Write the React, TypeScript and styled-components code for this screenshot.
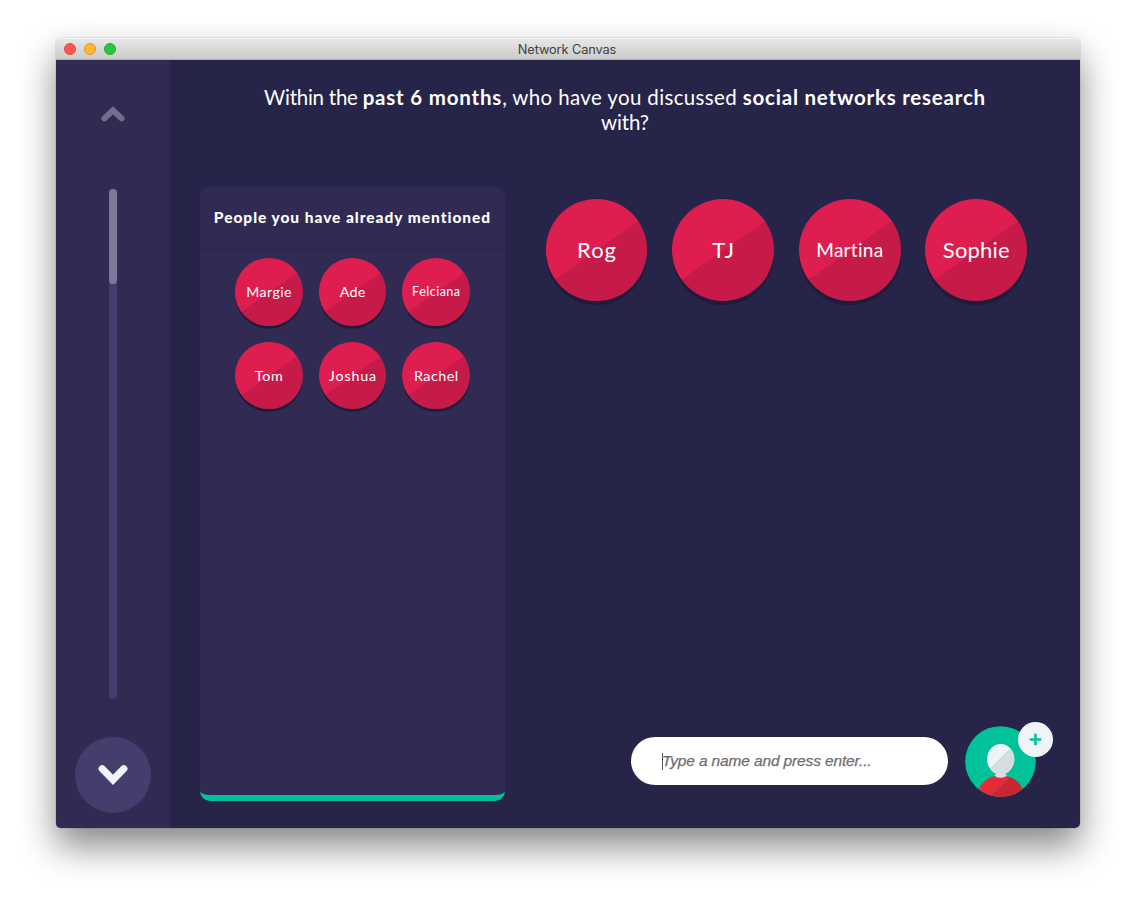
import React from "react";
import styled, { createGlobalStyle } from "styled-components";

const colors = {
  background: "#272449",
  panel: "#312b54",
  control: "#433e6d",
  node: "#df1e50",
  nodeShade: "#c61a49",
  nodeShadow: "#1f1c3b",
  teal: "#00c299",
  light: "#f0f4f6",
};

const GlobalStyle = createGlobalStyle`
  * { box-sizing: border-box; }
  html, body { margin: 0; background: #fff; }
  body {
    font-family: Lato, "Open Sans", sans-serif;
    font-variant-ligatures: none;
    color: #fff;
    overflow: hidden;
  }
`;

const Desktop = styled.div`
  width: 1136px;
  height: 902px;
  padding: 38px 56px;
`;

const Window = styled.div`
  width: 1024px;
  height: 790px;
  display: flex;
  flex-direction: column;
  border-radius: 5px;
  box-shadow: 0 0 1px rgba(0, 0, 0, 0.6), 0 18px 36px rgba(0, 0, 0, 0.48);
`;

const TitleBar = styled.header`
  height: 22px;
  flex: none;
  display: grid;
  grid-template-columns: 1fr auto 1fr;
  align-items: center;
  padding: 0 8px;
  border-radius: 5px 5px 0 0;
  border-bottom: 1px solid #b0b0b0;
  background: linear-gradient(#e8e8e8, #cbcbcb);
  box-shadow: inset 0 1px #f4f4f4;
`;

const Lights = styled.div`
  display: flex;
  gap: 8px;
`;

const Light = styled.span<{ $fill: string; $edge: string }>`
  width: 12px;
  height: 12px;
  border-radius: 50%;
  background: ${(p) => p.$fill};
  border: 1px solid ${(p) => p.$edge};
`;

const Title = styled.span`
  font: 400 12.8px/20px Inter, sans-serif;
  letter-spacing: -0.12px;
  padding: 2px 2px 0 0;
  color: #404040;
`;

const Body = styled.div`
  flex: 1;
  display: flex;
  min-height: 0;
  overflow: hidden;
  border-radius: 0 0 5px 5px;
  background: ${colors.background};
`;

const Sidebar = styled.nav`
  width: 114px;
  display: flex;
  flex-direction: column;
  align-items: center;
  padding: 16px 0 15px;
  background: ${colors.panel};
`;

const NavButton = styled.button<{ $filled?: boolean }>`
  width: 76px;
  height: 76px;
  flex: none;
  padding: 0;
  border: 0;
  border-radius: 50%;
  background: ${(p) => (p.$filled ? colors.control : "transparent")};
  svg { display: block; }
`;

const Track = styled.div`
  width: 8px;
  height: 510px;
  margin: 37px 0 38px;
  border-radius: 4px;
  background: ${colors.control};
`;

const Progress = styled.div`
  height: 95px;
  border-radius: 4px;
  background: #7d799a;
`;

const Stage = styled.main`
  flex: 1;
  display: flex;
  flex-direction: column;
  padding: 25px 27px 27px 30px;
`;

const Prompt = styled.h1`
  height: 102px;
  margin: 0;
  padding-right: 3px;
  text-align: center;
  font-size: 20.5px;
  font-weight: 400;
  line-height: 25px;
  white-space: nowrap;
`;

const Span = styled.span<{ $spacing: number; $bold?: boolean }>`
  letter-spacing: ${(p) => p.$spacing}px;
  font-weight: ${(p) => (p.$bold ? 700 : 400)};
`;

const Columns = styled.div`
  flex: 1;
  display: flex;
`;

const Panel = styled.section`
  width: 305px;
  height: 614px;
  border-radius: 10px;
  border-bottom: 6px solid ${colors.teal};
  background: ${colors.panel};
`;

const PanelTitle = styled.h2`
  height: 63px;
  margin: 0;
  border-bottom: 1px solid ${colors.background};
  text-align: center;
  font-size: 15.5px;
  font-weight: 900;
  line-height: 61px;
  letter-spacing: 0.95px;
  white-space: nowrap;
`;

const PanelNodes = styled.div`
  display: grid;
  grid-template-columns: repeat(3, 67.5px);
  justify-content: center;
  gap: 16.1px;
  padding-top: 8.4px;
`;

const Main = styled.section`
  flex: 1;
  display: flex;
  flex-direction: column;
  justify-content: space-between;
`;

const MainNodes = styled.div`
  display: flex;
  gap: 24.7px;
  padding: 12.4px 0 0 40.6px;
`;

const Node = styled.div<{ $size: number; $font: number; $spacing: number }>`
  width: ${(p) => p.$size}px;
  height: ${(p) => p.$size}px;
  display: flex;
  align-items: center;
  justify-content: center;
  border-radius: 50%;
  padding: 0 0 1.4px ${(p) => p.$spacing}px;
  font-size: ${(p) => p.$font}px;
  letter-spacing: ${(p) => p.$spacing}px;
  background: linear-gradient(145deg, ${colors.node} 50%, ${colors.nodeShade} 50.5%);
  box-shadow: 0 ${(p) => p.$size * 0.04}px 0 ${colors.nodeShadow};
`;

const AddRow = styled.div`
  display: flex;
  align-items: flex-end;
  justify-content: flex-end;
  padding: 0 17px 4px 0;
`;

const NameField = styled.div`
  width: 317px;
  height: 48px;
  display: flex;
  align-items: center;
  margin: 0 17px 12px 0;
  padding-left: 31px;
  border-radius: 24px;
  background: #fff;
  color: #6e6e6e;
  font: italic 400 15.5px/48px "Liberation Sans", Arial, sans-serif;
  letter-spacing: -0.14px;
  -webkit-text-stroke: 0.25px #6e6e6e;
`;

const Caret = styled.span`
  width: 1px;
  height: 17px;
  margin-right: -1px;
  background: #555;
`;

const AddPerson = styled.button`
  position: relative;
  width: 71px;
  height: 71px;
  padding: 0;
  border: 0;
  background: none;
`;

const Badge = styled.span`
  position: absolute;
  top: -4.5px;
  right: -17px;
  width: 35px;
  height: 35px;
  border-radius: 50%;
  background: ${colors.light};
  svg { display: block; }
`;

const mentioned = [
  { name: "Margie", font: 14, spacing: 0.5 },
  { name: "Ade", font: 14.3, spacing: 0.3 },
  { name: "Felciana", font: 12.5, spacing: 0.5 },
  { name: "Tom", font: 14.3, spacing: 0.5 },
  { name: "Joshua", font: 14.3, spacing: 0.85 },
  { name: "Rachel", font: 14.3, spacing: 0.5 },
];

const discussed = [
  { name: "Rog", font: 22, spacing: 1 },
  { name: "TJ", font: 22, spacing: 1 },
  { name: "Martina", font: 19, spacing: 0.3 },
  { name: "Sophie", font: 22, spacing: 0.2 },
];

const Avatar = () => (
  <svg width="71" height="71" viewBox="134 78 213 213" style={{ display: "block" }}>
    <defs>
      <clipPath id="disc"><circle cx="240.5" cy="184.5" r="106" /></clipPath>
      <clipPath id="head"><ellipse cx="241" cy="177.5" rx="41" ry="45.5" /></clipPath>
      <clipPath id="torso"><ellipse cx="241" cy="292" rx="71" ry="66" /></clipPath>
    </defs>
    <circle cx="240.5" cy="184.5" r="106" fill={colors.teal} />
    <g clipPath="url(#disc)">
      <g clipPath="url(#torso)">
        <rect x="150" y="215" width="190" height="90" fill="#e72a38" />
        <path d="M291 210L201 300H360V210Z" fill="#c92631" />
        <path d="M291 210L201 300" stroke="#8d5150" strokeWidth="2" />
      </g>
      <path d="M228 212V220Q226 225 222 227Q240 240 260 227Q256 225 255 220V212Z" fill="#d5dde1" />
      <g clipPath="url(#head)">
        <rect x="195" y="130" width="90" height="95" fill={colors.light} />
        <path d="M296 120L190 226H300V120Z" fill="#d5dde1" />
        <path d="M296 120L190 226" stroke="#a9d9cf" strokeWidth="2" />
      </g>
    </g>
  </svg>
);

export default function App() {
  return (
    <>
      <GlobalStyle />
      <Desktop>
        <Window>
          <TitleBar>
            <Lights>
              <Light $fill="#ff5750" $edge="#e2463f" />
              <Light $fill="#ffb92e" $edge="#de9c24" />
              <Light $fill="#27c83f" $edge="#1dad2c" />
            </Lights>
            <Title>Network Canvas</Title>
          </TitleBar>
          <Body>
            <Sidebar>
              <NavButton aria-label="Previous">
                <svg width="76" height="76" fill="none" stroke="#736e8e" strokeWidth="6" strokeLinecap="round">
                  <path d="M29.4 42.4L38 34.3L46.6 42.4" />
                </svg>
              </NavButton>
              <Track><Progress /></Track>
              <NavButton $filled aria-label="Next">
                <svg width="76" height="76" fill="none" stroke={colors.light} strokeWidth="7.2" strokeLinecap="round">
                  <path d="M27.2 31.8L38 42.8L48.8 31.8" />
                </svg>
              </NavButton>
            </Sidebar>
            <Stage>
              <Prompt>
                <Span $spacing={-0.25}>Within the </Span>
                <Span $spacing={0.8} $bold>past 6 months</Span>
                <Span $spacing={0.36}>, who have you discussed </Span>
                <Span $spacing={0.78} $bold>social networks research</Span>
                <br />
                <Span $spacing={-0.15}>with?</Span>
              </Prompt>
              <Columns>
                <Panel>
                  <PanelTitle>People you have already mentioned</PanelTitle>
                  <PanelNodes>
                    {mentioned.map((n) => (
                      <Node key={n.name} $size={67.5} $font={n.font} $spacing={n.spacing}>{n.name}</Node>
                    ))}
                  </PanelNodes>
                </Panel>
                <Main>
                  <MainNodes>
                    {discussed.map((n) => (
                      <Node key={n.name} $size={101.9} $font={n.font} $spacing={n.spacing}>{n.name}</Node>
                    ))}
                  </MainNodes>
                  <AddRow>
                    <NameField><Caret />Type a name and press enter...</NameField>
                    <AddPerson aria-label="Add a person">
                      <Avatar />
                      <Badge>
                        <svg width="35" height="35" fill="none" stroke={colors.teal} strokeWidth="2.6">
                          <path d="M11.7 17.5H23.3M17.5 11.7V23.3" />
                        </svg>
                      </Badge>
                    </AddPerson>
                  </AddRow>
                </Main>
              </Columns>
            </Stage>
          </Body>
        </Window>
      </Desktop>
    </>
  );
}
